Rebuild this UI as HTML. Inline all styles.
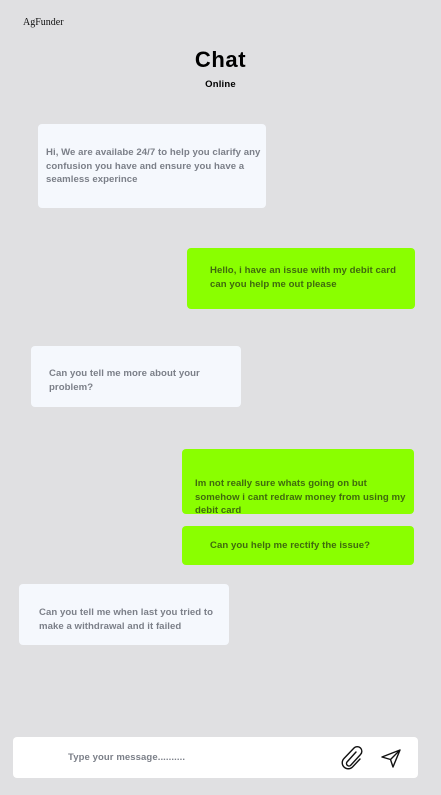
<!DOCTYPE html>
<html><head><meta charset="utf-8"><style>
*{margin:0;padding:0;box-sizing:border-box}
body{width:441px;height:795px;background:#e0e0e2;position:relative;overflow:hidden;font-family:"Liberation Sans",sans-serif}
.b{position:absolute;border-radius:4px;font-size:9.6px;line-height:13.5px;font-weight:bold;color:#7b7f88;letter-spacing:0.05px;white-space:nowrap}
.w{background:#f5f8fd}
.g{background:#8aff00;color:#3f6a0e}
.b div{position:absolute}
</style></head><body>
<div style="position:absolute;left:23px;top:17px;font-family:'Liberation Serif',serif;font-size:10px;color:#111">AgFunder</div>
<div style="position:absolute;left:0;width:441px;top:47px;text-align:center;font-size:22px;font-weight:bold;color:#000;letter-spacing:0.6px">Chat</div>
<div style="position:absolute;left:0;width:441px;top:79px;text-align:center;font-size:9.5px;font-weight:bold;color:#000;letter-spacing:0.2px">Online</div>

<div class="b w" style="left:38px;top:124px;width:228px;height:84px"><div style="left:8px;top:22px">Hi, We are availabe 24/7 to help you clarify any<br>confusion you have and ensure you have a<br>seamless experince</div></div>

<div class="b g" style="left:187px;top:248px;width:228px;height:61px"><div style="left:23px;top:16px">Hello, i have an issue with my debit card<br>can you help me out please</div></div>

<div class="b w" style="left:31px;top:346px;width:210px;height:61px"><div style="left:18px;top:21px">Can you tell me more about your<br>problem?</div></div>

<div class="b g" style="left:182px;top:449px;width:232px;height:65px"><div style="left:13px;top:28px">Im not really sure whats going on but<br>somehow i cant redraw money from using my<br>debit card</div></div>

<div class="b g" style="left:182px;top:526px;width:232px;height:39px"><div style="left:28px;top:13px">Can you help me rectify the issue?</div></div>

<div class="b w" style="left:19px;top:584px;width:210px;height:61px"><div style="left:20px;top:22px">Can you tell me when last you tried to<br>make a withdrawal and it failed</div></div>

<div style="position:absolute;left:13px;top:737px;width:405px;height:41px;background:#fff;border-radius:4px">
<div style="position:absolute;left:55px;top:15px;font-size:9.5px;font-weight:bold;color:#7b7f88;letter-spacing:0.1px">Type your message..........</div>
<svg style="position:absolute;left:326px;top:7px" width="26" height="26" viewBox="0 0 26 26" fill="none" stroke="#111" stroke-width="1.4" stroke-linecap="round"><path d="M17 8 L8 18 a2.5 2.5 0 0 0 3.5 3.5 L21.5 10.5 a4.5 4.5 0 0 0 -6.5 -6.5 L5 14.5 a6 6 0 0 0 8.5 8.5 L21 15"/></svg>
<svg style="position:absolute;left:366px;top:10px" width="24" height="22" viewBox="0 0 24 22" fill="none" stroke="#111" stroke-width="1.4" stroke-linejoin="round"><path d="M3 10 L21 3 L14 20 L11.5 12.5 Z M11.5 12.5 L21 3"/></svg>
</div>
</body></html>
